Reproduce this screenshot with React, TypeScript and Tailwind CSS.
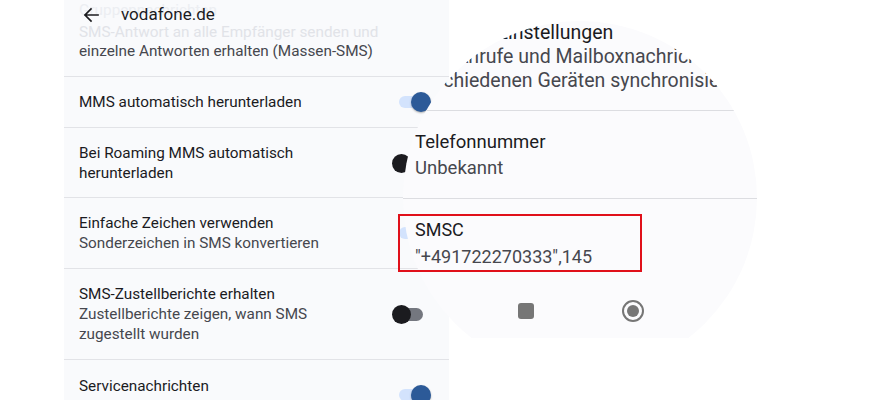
import React from "react";

function Toggle({ on, className = "" }: { on: boolean; className?: string }) {
  return (
    <div className={`relative w-[40px] h-[20px] shrink-0 ${className}`}>
      {on ? (
        <>
          <div className="absolute left-[8px] top-[4px] w-[28px] h-[12px] rounded-full bg-[#d3e3fd]" />
          <div className="absolute left-[20px] top-0 w-[20px] h-[20px] rounded-full bg-[#2c5a98] shadow-[0_1px_2px_rgba(0,0,0,0.3)]" />
        </>
      ) : (
        <>
          <div className="absolute left-[4px] top-[4px] w-[28px] h-[13px] rounded-full bg-[#74777f]" />
          <div className="absolute left-[1px] top-[1px] w-[19px] h-[19px] rounded-full bg-[#1b1b1f]" />
        </>
      )}
    </div>
  );
}

function Row({
  h,
  title,
  sub,
  on,
}: {
  h: string;
  title: string[];
  sub?: string[];
  on: boolean;
}) {
  return (
    <div
      className={`${h} shrink-0 flex items-center justify-between pl-[15px] pr-[18px] border-b border-[#e2e3e7]`}
    >
      <div className="flex flex-col text-[15.3px] leading-[20px]">
        {title.map((t) => (
          <div key={t} className="text-[#1b1b1f]">
            {t}
          </div>
        ))}
        {sub?.map((s) => (
          <div key={s} className="text-[#46474e]">
            {s}
          </div>
        ))}
      </div>
      <Toggle on={on} />
    </div>
  );
}

export default function App() {
  return (
    <div className="relative w-[879px] h-[400px] overflow-hidden bg-white font-['Roboto',sans-serif]">
      <div className="flex h-full pl-[64px]">
        <div className="w-[385px] h-full bg-[#f9fafc] flex flex-col overflow-hidden">
          {/* top block */}
          <div className="relative h-[77px] shrink-0 border-b border-[#e2e3e7] pl-[15px] text-[15.3px]">
            <div className="leading-[20px] text-[#eceef2]">Gruppennachrichten</div>
            <div className="mt-[3px] leading-[19px] text-[#e1e3e8]">
              SMS-Antwort an alle Empfänger senden und
            </div>
            <div className="leading-[19px] text-[#46474e]">
              einzelne Antworten erhalten (Massen-SMS)
            </div>
            <div className="absolute left-[19px] top-0 h-[30px] flex items-center gap-[22px]">
              <svg width="16" height="16" viewBox="0 0 16 16" fill="none">
                <path
                  d="M15 8H2M8 2L2 8L8 14"
                  stroke="#1b1b1f"
                  strokeWidth="1.7"
                  strokeLinecap="square"
                />
              </svg>
              <span className="text-[17px] text-[#1b1b1f]">vodafone.de</span>
            </div>
          </div>
          <Row h="h-[51px]" title={["MMS automatisch herunterladen"]} on={true} />
          <Row
            h="h-[70px]"
            title={["Bei Roaming MMS automatisch", "herunterladen"]}
            on={false}
          />
          <Row
            h="h-[71px]"
            title={["Einfache Zeichen verwenden"]}
            sub={["Sonderzeichen in SMS konvertieren"]}
            on={true}
          />
          <Row
            h="h-[91px]"
            title={["SMS-Zustellberichte erhalten"]}
            sub={["Zustellberichte zeigen, wann SMS", "zugestellt wurden"]}
            on={false}
          />
          <div className="flex-1 flex items-start justify-between pl-[15px] pr-[18px]">
            <div className="pt-[16px] text-[15.3px] leading-[20px] text-[#1b1b1f]">
              Servicenachrichten
            </div>
            <Toggle on={true} className="mt-[25px]" />
          </div>
        </div>
      </div>

      {/* magnifier circle */}
      <div className="absolute left-[403px] top-[21px] w-[354px] h-[317px] overflow-hidden">
        <div className="w-[354px] h-[354px] rounded-full overflow-hidden bg-[#fbfbfd] flex flex-col">
          <div className="text-[19.5px] leading-[24px] whitespace-nowrap">
            <div className="pl-[1px] text-[#1b1b1f]">Erweiterte Einstellungen</div>
            <div className="pl-[15px] text-[#46474e]">Ihre Anrufe und Mailboxnachrichten zwischen</div>
            <div className="pl-[4px] text-[#46474e]">verschiedenen Geräten synchronisieren</div>
          </div>
          <div className="mt-[17px] h-px bg-[#dcdde1] shrink-0" />
          <div className="mt-[18px] pl-[12px] text-[18.5px] leading-[26px]">
            <div className="text-[#1b1b1f]">Telefonnummer</div>
            <div className="text-[#46474e]">Unbekannt</div>
          </div>
          <div className="mt-[17px] h-px bg-[#dcdde1] shrink-0" />
          <div className="mt-[17px] pl-[12px] text-[18px] leading-[27px]">
            <div className="text-[#1b1b1f]">SMSC</div>
            <div className="text-[#46474e]">"+491722270333",145</div>
          </div>
          <div className="mt-[30px] h-[22px] shrink-0 flex items-center pl-[115px] gap-[88px]">
            <div className="w-[16px] h-[16px] rounded-[3px] bg-[#767676]" />
            <svg width="22" height="22" viewBox="0 0 22 22">
              <circle cx="11" cy="11" r="10" fill="none" stroke="#767676" strokeWidth="2" />
              <circle cx="11" cy="11" r="6" fill="#767676" />
            </svg>
          </div>
        </div>
      </div>

      {/* red highlight */}
      <div className="absolute left-[398px] top-[214px] w-[244px] h-[58px] border-2 border-[#e0101a]" />
    </div>
  );
}
